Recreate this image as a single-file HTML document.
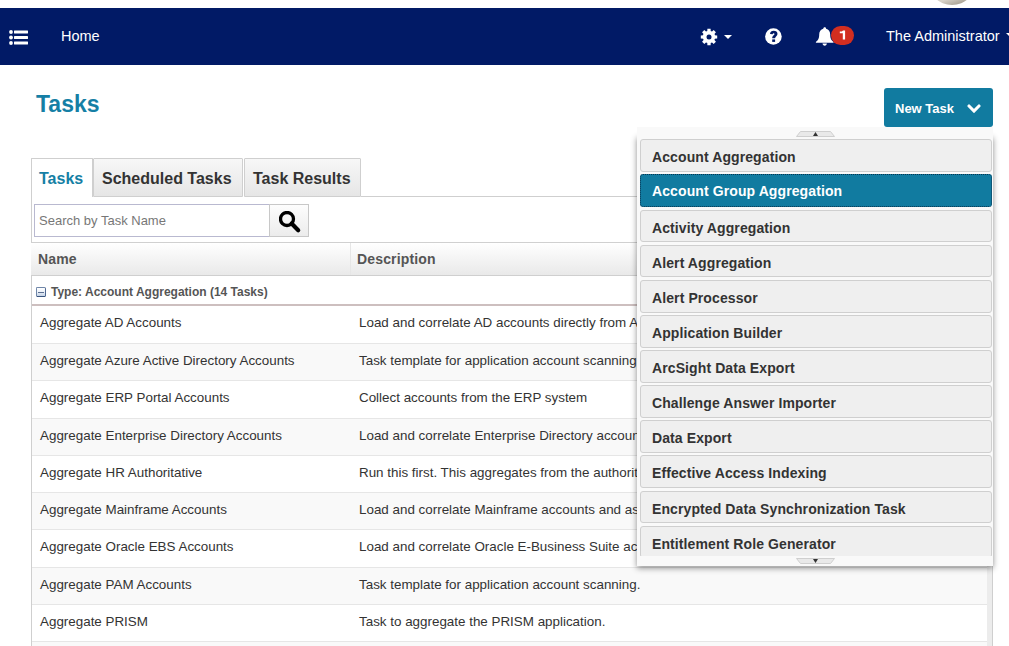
<!DOCTYPE html>
<html><head><meta charset="utf-8">
<style>
*{box-sizing:border-box;margin:0;padding:0}
html,body{width:1009px;height:646px;overflow:hidden;background:#fff;font-family:"Liberation Sans",sans-serif;position:relative}
.abs{position:absolute}
#avatar{left:927.5px;top:-43.6px;width:48.6px;height:48.6px;border-radius:50%;background:linear-gradient(160deg,#8f897c 0,#b9b2a4 55%,#d9d4ca 75%,#a39c8e 92%,#7f796d 100%)}
#nav{left:0;top:8px;width:1009px;height:57px;background:#011a66;color:#fff}
#nav .t{position:absolute;font-size:14.5px;line-height:16px;white-space:nowrap}
#title{left:36px;top:91px;font-size:23px;font-weight:bold;color:#157fa5;line-height:26px}
#newtask{left:884px;top:88px;width:109px;height:39px;background:#117ba0;border-radius:3px;color:#fff}
#newtask span{position:absolute;left:11px;top:12.8px;font-size:13px;font-weight:bold;line-height:15px}
.tab{position:absolute;top:158px;height:39px;border:1px solid #cfcfcf;border-radius:1px 1px 0 0;background:linear-gradient(#f7f7f7,#e6e6e6);font-size:16px;font-weight:bold;color:#333;line-height:18px;padding-top:11px;white-space:nowrap}
.tab.act{background:#fff;color:#157fa5;height:39px;border-bottom:none}
#tabline{left:361px;top:196px;width:632px;height:1px;background:#cfcfcf}
#panel{left:31px;top:196px;width:962px;height:460px;border-left:1px solid #cfcfcf;border-right:1px solid #cfcfcf}
#search{left:34px;top:204px;width:236px;height:33px;border:1px solid #b9b9d0;background:#fff}
#search span{position:absolute;left:4px;top:8px;font-size:13px;color:#777;line-height:15px}
#sbtn{left:269px;top:204px;width:40px;height:33px;border:1px solid #c8c8c8;background:linear-gradient(#fdfdfd,#ececec)}
#thead{left:31px;top:242px;width:962px;height:34px;border-top:1px solid #d0d0d0;border-bottom:1px solid #cfcfcf;background:linear-gradient(#fff,#e9e9e9)}
#thead span{position:absolute;top:8px;font-size:14px;font-weight:bold;color:#555;line-height:16px;letter-spacing:0.15px}
#colsep{left:350px;top:243px;width:1px;height:32px;background:#e6e6e6}
#group{left:32px;top:276px;width:955px;height:30px;background:#fff;border-bottom:2px solid #cdbfbf}
#group .ic{position:absolute;left:4px;top:11px;width:10px;height:10px;border:1px solid #6f86a8;border-bottom-color:#3a557f;border-right-color:#4d6690;border-radius:1.5px;background:linear-gradient(#ffffff 0,#eef3fa 45%,#c5d3e6 100%)}
#group .ic:after{content:"";position:absolute;left:1px;top:3.5px;width:6px;height:1.5px;background:#5d7092}
#group span{position:absolute;left:19px;top:9px;font-size:12px;font-weight:bold;color:#555;line-height:14px}
.row{position:absolute;left:32px;width:955px;border-bottom:1px solid #e6e6e6;font-size:13.4px;color:#333;white-space:nowrap;overflow:hidden}
.row.g{background:#f9f9f9}
.row span{position:absolute;top:9px;line-height:15px}
.row .n{left:8px}
.row .d{left:327px}
#rscroll{left:987px;top:305px;width:6px;height:341px;background:#ececec;border-right:1px solid #cfcfcf}
#dd{left:637px;top:127px;width:356px;height:439px;background:#f9f9f9;overflow:hidden}
#ddsh{left:637px;top:136px;width:356px;height:430px;background:#f9f9f9;box-shadow:0 2px 6px rgba(0,0,0,.45)}
#dd .it{position:absolute;left:3px;width:352px;height:32.8px;border:1px solid #cfcfcf;border-radius:3px;background:#efefef;font-size:14px;font-weight:bold;color:#333;white-space:nowrap;letter-spacing:0.1px}
#dd .it span{position:absolute;left:11px;top:9px;line-height:16px}
#dd .it.sel{background:#117ba0;color:#fff;border:1px dotted #0a3550}
#dd .it.sel span{top:7.5px}
.arr{position:absolute;left:159px;width:39px;height:6px}
</style></head><body>
<div id="avatar" class="abs"></div>
<div id="nav" class="abs">
  <svg class="abs" style="left:8.5px;top:21.6px" width="20" height="15" viewBox="0 0 20 15">
    <circle cx="2" cy="2" r="1.9" fill="#fff"/><circle cx="2" cy="7.5" r="1.9" fill="#fff"/><circle cx="2" cy="13" r="1.9" fill="#fff"/>
    <rect x="5" y="0.6" width="14" height="2.8" rx="0.3" fill="#fff"/><rect x="5" y="6.1" width="14" height="2.8" rx="0.3" fill="#fff"/><rect x="5" y="11.6" width="14" height="2.8" rx="0.3" fill="#fff"/>
  </svg>
  <div class="t" style="left:61px;top:20px">Home</div>
  <svg class="abs" style="left:700.2px;top:19.6px" width="18" height="18" viewBox="0 0 18 18"><circle cx="9" cy="9" r="6.2" fill="#fff"/><path fill="#fff" d="M7.25 14.00 L10.75 14.00 L10.61 17.20 L7.39 17.20ZM4.23 11.30 L6.70 13.77 L4.34 15.94 L2.06 13.66ZM4.00 7.25 L4.00 10.75 L0.80 10.61 L0.80 7.39ZM6.70 4.23 L4.23 6.70 L2.06 4.34 L4.34 2.06ZM10.75 4.00 L7.25 4.00 L7.39 0.80 L10.61 0.80ZM13.77 6.70 L11.30 4.23 L13.66 2.06 L15.94 4.34ZM14.00 10.75 L14.00 7.25 L17.20 7.39 L17.20 10.61ZM11.30 13.77 L13.77 11.30 L15.94 13.66 L13.66 15.94Z"/><circle cx="9" cy="9" r="2.5" fill="#011a66"/></svg>
  <svg class="abs" style="left:724px;top:27px" width="8" height="4" viewBox="0 0 8 4"><path d="M0 0h8L4 4z" fill="#fff"/></svg>
  <svg class="abs" style="left:765px;top:19.6px" width="17" height="17" viewBox="0 0 17 17"><circle cx="8.4" cy="8.5" r="8.3" fill="#fff"/><path d="M5 6.1C5 4 6.6 2.8 8.7 2.8C10.9 2.8 12.5 4 12.5 5.9C12.5 8 10.1 8.3 10.1 10.3H7.2C7.2 7.6 9.5 7.3 9.5 6C9.5 5.5 9.1 5.2 8.6 5.2C8 5.2 7.7 5.6 7.7 6.3Z" fill="#011a66"/><rect x="7.2" y="11.4" width="2.9" height="2.5" fill="#011a66"/></svg>
  <svg class="abs" style="left:814.5px;top:18.6px" width="20" height="20" viewBox="0 0 20 20"><path d="M9.7 0.3c.9 0 1.4.6 1.4 1.4 2.6.6 4.1 2.7 4.1 5.8 0 4.3 1.3 5.8 3.3 7.5v.8H0.9v-.8c2-1.7 3.3-3.2 3.3-7.5 0-3.1 1.5-5.2 4.1-5.8 0-.8.5-1.4 1.4-1.4z M7.5 16.6h4.4c0 1.2-1 2.1-2.2 2.1s-2.2-.9-2.2-2.1z" fill="#fff"/></svg>
  <div class="abs" style="left:831px;top:18px;width:23px;height:19px;border-radius:9.5px;background:#d22e20"><svg class="abs" style="left:0;top:0" width="23" height="19" viewBox="0 0 23 19"><path d="M12 4.4h2.1v9.2h-2.3v-6.4h-3v-1.6c1.6 0 2.6-.3 3.2-1.2z" fill="#fff"/></svg></div>
  <div class="t" style="left:886px;top:20px">The Administrator</div>
  <svg class="abs" style="left:1006px;top:24.5px" width="8" height="4" viewBox="0 0 8 4"><path d="M0 0h8L4 4z" fill="#fff"/></svg>
</div>
<div id="title" class="abs">Tasks</div>
<div id="newtask" class="abs"><span>New Task</span>
  <svg class="abs" style="left:82.6px;top:15.8px" width="14" height="9" viewBox="0 0 14 9"><path d="M2 2l5 5 5-5" stroke="#fff" stroke-width="3.1" stroke-linecap="round" fill="none"/></svg>
</div>

<div id="panel" class="abs"></div>
<div class="tab act" style="left:31px;width:62px;padding-left:7px">Tasks</div>
<div class="tab" style="left:93px;width:150px;padding-left:8px">Scheduled Tasks</div>
<div class="tab" style="left:244px;width:117px;padding-left:8px">Task Results</div>
<div id="tabline" class="abs"></div>

<div id="search" class="abs"><span>Search by Task Name</span></div>
<div id="sbtn" class="abs"><svg class="abs" style="left:8.6px;top:6.2px" width="23" height="23" viewBox="0 0 23 23"><circle cx="8" cy="8" r="6.5" stroke="#000" stroke-width="3.3" fill="none"/><path d="M12.6 12.6l6.6 6.6" stroke="#000" stroke-width="4.2" stroke-linecap="round"/></svg></div>

<div id="thead" class="abs"><span style="left:7px">Name</span><span style="left:326px">Description</span></div>
<div id="colsep" class="abs"></div>
<div id="group" class="abs"><div class="ic"></div><span>Type: Account Aggregation (14 Tasks)</span></div>

<div class="row" style="top:306px;height:38px"><span class="n">Aggregate AD Accounts</span><span class="d">Load and correlate AD accounts directly from Active Directory.</span></div>
<div class="row g" style="top:344px;height:37px"><span class="n">Aggregate Azure Active Directory Accounts</span><span class="d">Task template for application account scanning.</span></div>
<div class="row" style="top:381px;height:38px"><span class="n">Aggregate ERP Portal Accounts</span><span class="d">Collect accounts from the ERP system</span></div>
<div class="row g" style="top:419px;height:37px"><span class="n">Aggregate Enterprise Directory Accounts</span><span class="d">Load and correlate Enterprise Directory accounts.</span></div>
<div class="row" style="top:456px;height:37px"><span class="n">Aggregate HR Authoritative</span><span class="d">Run this first. This aggregates from the authoritative source.</span></div>
<div class="row g" style="top:493px;height:37px"><span class="n">Aggregate Mainframe Accounts</span><span class="d">Load and correlate Mainframe accounts and assign.</span></div>
<div class="row" style="top:530px;height:38px"><span class="n">Aggregate Oracle EBS Accounts</span><span class="d">Load and correlate Oracle E-Business Suite accounts.</span></div>
<div class="row g" style="top:568px;height:37px"><span class="n">Aggregate PAM Accounts</span><span class="d">Task template for application account scanning.</span></div>
<div class="row" style="top:605px;height:37px"><span class="n">Aggregate PRISM</span><span class="d">Task to aggregate the PRISM application.</span></div>
<div class="row g" style="top:642px;height:39px"><span class="n"></span><span class="d"></span></div>
<div id="rscroll" class="abs"></div>

<div id="ddsh" class="abs"></div>
<div id="dd" class="abs">
  <svg class="arr" style="top:4px" width="39" height="6" viewBox="0 0 39 6"><path d="M4.5 0.5h30l4 5H0.5z" fill="#e9e9e9" stroke="#cfcfcf"/><path d="M17 5l2.5-4 2.5 4z" fill="#333"/></svg>
  <div class="it" style="top:12.30px"><span>Account Aggregation</span></div>
  <div class="it sel" style="top:47.42px"><span>Account Group Aggregation</span></div>
  <div class="it" style="top:82.54px"><span>Activity Aggregation</span></div>
  <div class="it" style="top:117.66px"><span>Alert Aggregation</span></div>
  <div class="it" style="top:152.78px"><span>Alert Processor</span></div>
  <div class="it" style="top:187.90px"><span>Application Builder</span></div>
  <div class="it" style="top:223.02px"><span>ArcSight Data Export</span></div>
  <div class="it" style="top:258.14px"><span>Challenge Answer Importer</span></div>
  <div class="it" style="top:293.26px"><span>Data Export</span></div>
  <div class="it" style="top:328.38px"><span>Effective Access Indexing</span></div>
  <div class="it" style="top:363.50px"><span>Encrypted Data Synchronization Task</span></div>
  <div style="position:absolute;left:0;top:398.62px;width:356px;height:30px;overflow:hidden"><div class="it" style="top:0"><span>Entitlement Role Generator</span></div></div>
  <svg class="arr" style="top:431px" width="39" height="6" viewBox="0 0 39 6"><path d="M0.5 0.5h38l-4 5h-30z" fill="#e9e9e9" stroke="#cfcfcf"/><path d="M17 1l2.5 4 2.5-4z" fill="#333"/></svg>
</div>
</body></html>
